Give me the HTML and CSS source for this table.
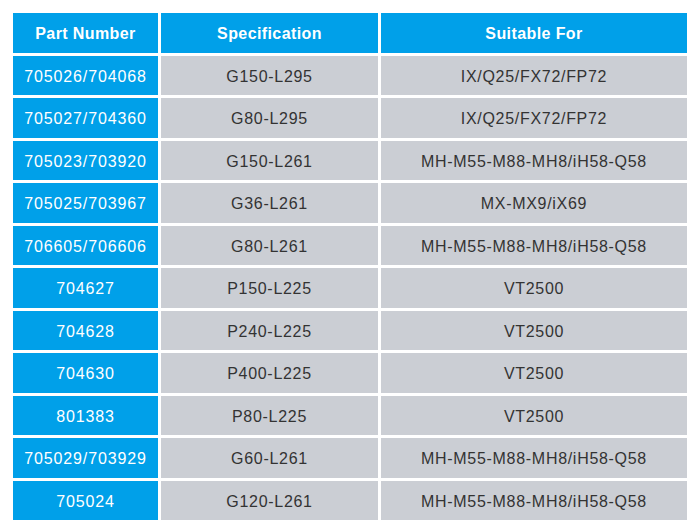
FILE: index.html
```html
<!DOCTYPE html>
<html>
<head>
<meta charset="utf-8">
<link rel="stylesheet" href="styles.css">
</head>
<body>
<div class="table">
  <div class="cell head">Part Number</div>
  <div class="cell head">Specification</div>
  <div class="cell head">Suitable For</div>

  <div class="cell part">705026/704068</div>
  <div class="cell data">G150-L295</div>
  <div class="cell data">IX/Q25/FX72/FP72</div>

  <div class="cell part">705027/704360</div>
  <div class="cell data">G80-L295</div>
  <div class="cell data">IX/Q25/FX72/FP72</div>

  <div class="cell part">705023/703920</div>
  <div class="cell data">G150-L261</div>
  <div class="cell data">MH-M55-M88-MH8/iH58-Q58</div>

  <div class="cell part">705025/703967</div>
  <div class="cell data">G36-L261</div>
  <div class="cell data">MX-MX9/iX69</div>

  <div class="cell part">706605/706606</div>
  <div class="cell data">G80-L261</div>
  <div class="cell data">MH-M55-M88-MH8/iH58-Q58</div>

  <div class="cell part">704627</div>
  <div class="cell data">P150-L225</div>
  <div class="cell data">VT2500</div>

  <div class="cell part">704628</div>
  <div class="cell data">P240-L225</div>
  <div class="cell data">VT2500</div>

  <div class="cell part">704630</div>
  <div class="cell data">P400-L225</div>
  <div class="cell data">VT2500</div>

  <div class="cell part">801383</div>
  <div class="cell data">P80-L225</div>
  <div class="cell data">VT2500</div>

  <div class="cell part">705029/703929</div>
  <div class="cell data">G60-L261</div>
  <div class="cell data">MH-M55-M88-MH8/iH58-Q58</div>

  <div class="cell part">705024</div>
  <div class="cell data">G120-L261</div>
  <div class="cell data">MH-M55-M88-MH8/iH58-Q58</div>
</div>
</body>
</html>
```

FILE: styles.css
```css
html, body {
  margin: 0;
  padding: 0;
  background: #ffffff;
}
body {
  padding: 13px 0 0 13px;
  font-family: "Liberation Sans", Arial, sans-serif;
}
.table {
  display: grid;
  grid-template-columns: 145px 217px 306px;
  grid-auto-rows: 39.5px;
  gap: 3px;
  width: 674px;
}
.cell {
  display: flex;
  align-items: center;
  justify-content: center;
  box-sizing: border-box;
  padding-top: 3px;
  font-size: 16px;
  letter-spacing: 0.7px;
  white-space: nowrap;
}
.head {
  background: #00a0e9;
  color: #ffffff;
  font-weight: bold;
  letter-spacing: 0.4px;
  padding-top: 2px;
}
.part {
  background: #00a0e9;
  color: #ffffff;
  letter-spacing: 0.85px;
}
.data {
  background: #cbced4;
  color: #333333;
}
```
